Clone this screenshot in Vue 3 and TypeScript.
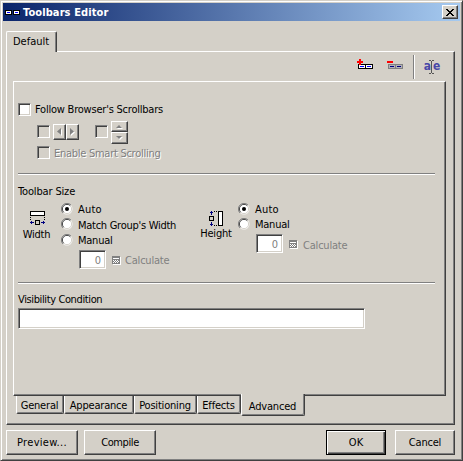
<script setup lang="ts">
import { ref } from 'vue'

type WidthMode = 'auto' | 'match' | 'manual'
type HeightMode = 'auto' | 'manual'

const pages = ['General', 'Appearance', 'Positioning', 'Effects', 'Advanced']
const page = ref('Advanced')
const follow = ref(false)
const widthMode = ref<WidthMode>('auto')
const heightMode = ref<HeightMode>('auto')
const condition = ref('')
const widthModes: { id: WidthMode; label: string }[] = [
  { id: 'auto', label: 'Auto' },
  { id: 'match', label: "Match Group's Width" },
  { id: 'manual', label: 'Manual' },
]
const heightModes: { id: HeightMode; label: string }[] = [
  { id: 'auto', label: 'Auto' },
  { id: 'manual', label: 'Manual' },
]
</script>

<template>
  <div class="window">
    <header class="titlebar">
      <svg class="logo" width="15" height="5" shape-rendering="crispEdges">
        <path d="M0 0h7v5h-7zM8 0h7v5h-7z" fill="#000" />
        <path d="M1 1h5v3h-5zM9 1h5v3h-5z" fill="#fff" />
        <path d="M2 2h3v1h-3zM10 2h3v1h-3z" fill="#00f" />
      </svg>
      <span class="title">Toolbars Editor</span>
      <button class="close" aria-label="Close">
        <svg width="8" height="7" shape-rendering="crispEdges">
          <path d="M0 0h2v1h-2zM6 0h2v1h-2zM1 1h2v1h-2zM5 1h2v1h-2zM2 2h4v1h-4zM3 3h2v1h-2zM2 4h4v1h-4zM1 5h2v1h-2zM5 5h2v1h-2zM0 6h2v1h-2zM6 6h2v1h-2z" />
        </svg>
      </button>
    </header>

    <div class="top-tabs"><div class="top-tab"><span class="t-default">Default</span></div></div>

    <section class="panel">
      <div class="toolbar">
        <svg class="add" width="16" height="11" shape-rendering="crispEdges">
          <path d="M1 5h15v5h-15z" fill="#000" />
          <path d="M2 6h6v3h-6zM9 6h6v3h-6z" fill="#fff" />
          <path d="M3 7h4v1h-4zM10 7h4v1h-4z" fill="#00f" />
          <path d="M2 0h2v2h2v2h-2v2h-2v-2h-2v-2h2z" fill="#f00" />
        </svg>
        <svg class="remove" width="16" height="11" shape-rendering="crispEdges">
          <path d="M1 5h15v5h-15z" fill="#808080" />
          <path d="M2 6h6v3h-6zM9 6h6v3h-6z" fill="#b0b0b8" />
          <path d="M3 7h4v1h-4zM10 7h4v1h-4z" fill="#000080" />
          <path d="M0 2h6v2h-6z" fill="#f00" />
        </svg>
        <i class="separator"></i>
        <div class="rename">
          <span>a</span>
          <svg width="5" height="14" shape-rendering="crispEdges">
            <path d="M0 0h2v1h-2zM3 0h2v1h-2zM2 1h1v12h-1zM0 13h2v1h-2zM3 13h2v1h-2z" fill="#555" />
          </svg>
          <span>e</span>
        </div>
      </div>

      <div class="page">
        <label class="row follow">
          <i class="check on"></i><span class="t-follow">Follow Browser's Scrollbars</span>
          <input v-model="follow" type="checkbox" hidden />
        </label>
        <div class="row scroll-dirs">
          <i class="check"></i>
          <div class="arrows horizontal">
            <b class="arrow"><svg width="4" height="7"><path d="M4 0v7L0 3.5z" fill="#808080" /></svg></b>
            <b class="arrow"><svg width="4" height="7"><path d="M0 0v7L4 3.5z" fill="#808080" /></svg></b>
          </div>
          <i class="check"></i>
          <div class="arrows vertical">
            <b class="arrow"><svg width="6" height="3"><path d="M0 3h6L3 0z" fill="#808080" /></svg></b>
            <b class="arrow"><svg width="6" height="3"><path d="M0 0h6L3 3z" fill="#808080" /></svg></b>
          </div>
        </div>
        <div class="row smart"><i class="check"></i><span class="t-smart">Enable Smart Scrolling</span></div>
        <hr class="rule" />

        <div class="heading t-size">Toolbar Size</div>
        <div class="sizes">
          <div class="kind width-kind">
            <svg width="16" height="16" shape-rendering="crispEdges">
              <path d="M1.5 1.5h14v4h-14z" fill="#fff" stroke="#000" />
              <path d="M1 7h1v1h-1zM1 9h1v1h-1zM15 7h1v1h-1zM15 9h1v1h-1z" />
              <path d="M6.5 10.500h4v4h-4z" fill="none" stroke="#000" />
              <path d="M1 12h4v1h-4zM2 11h1v3h-1zM12 12h4v1h-4zM14 11h1v3h-1z" fill="#000080" />
            </svg>
            <span class="t-width">Width</span>
          </div>
          <div class="options width-options">
            <label v-for="m in widthModes" :key="m.id" class="option">
              <input v-model="widthMode" type="radio" :value="m.id" hidden />
              <svg class="radio" width="12" height="12" viewBox="0 0 12 12">
                <circle cx="6" cy="6" r="5.500" fill="#fff" />
                <path d="M2 10A5.500 5.500 0 0 1 10 2" fill="none" stroke="#808080" />
                <path d="M2.700 9.300A4.600 4.600 0 0 1 9.300 2.700" fill="none" stroke="#404040" />
                <path d="M2.700 9.300A4.600 4.600 0 0 0 9.300 2.700" fill="none" stroke="#d4d0c8" />
                <circle v-if="widthMode === m.id" cx="6" cy="6" r="2" />
              </svg>
              <span :class="'t-' + m.id">{{ m.label }}</span>
            </label>
            <div class="manual"><div class="number">0</div>
              <svg class="calc" width="9" height="9" shape-rendering="crispEdges">
                <path d="M1 1h8v8h-8z" fill="#fff" /><path d="M0 0h8v8h-8z" fill="#808080" />
                <path d="M1 2h6v1h-6zM1 4h1v1h-1zM3 4h1v1h-1zM5 4h1v1h-1zM2 5h1v1h-1zM4 5h1v1h-1zM6 5h1v1h-1zM1 6h1v1h-1zM3 6h1v1h-1zM5 6h1v1h-1z" fill="#fff" />
              </svg>
              <span class="t-calc">Calculate</span>
            </div>
          </div>
          <div class="kind height-kind">
            <svg width="16" height="16" shape-rendering="crispEdges">
              <path d="M10.500 1.500h4v14h-4z" fill="#fff" stroke="#000" />
              <path d="M6 1h1v1h-1zM8 1h1v1h-1zM6 15h1v1h-1zM8 15h1v1h-1z" />
              <path d="M1.500 6.500h4v4h-4z" fill="none" stroke="#000" />
              <path d="M3 1h1v4h-1zM2 2h3v1h-3zM3 12h1v4h-1zM2 14h3v1h-3z" fill="#000080" />
            </svg>
            <span class="t-height">Height</span>
          </div>
          <div class="options">
            <label v-for="m in heightModes" :key="m.id" class="option">
              <input v-model="heightMode" type="radio" :value="m.id" hidden />
              <svg class="radio" width="12" height="12" viewBox="0 0 12 12">
                <circle cx="6" cy="6" r="5.500" fill="#fff" />
                <path d="M2 10A5.500 5.500 0 0 1 10 2" fill="none" stroke="#808080" />
                <path d="M2.700 9.300A4.600 4.600 0 0 1 9.300 2.700" fill="none" stroke="#404040" />
                <path d="M2.700 9.300A4.600 4.600 0 0 0 9.300 2.700" fill="none" stroke="#d4d0c8" />
                <circle v-if="heightMode === m.id" cx="6" cy="6" r="2" />
              </svg>
              <span :class="'t-' + m.id">{{ m.label }}</span>
            </label>
            <div class="manual"><div class="number">0</div>
              <svg class="calc" width="9" height="9" shape-rendering="crispEdges">
                <path d="M1 1h8v8h-8z" fill="#fff" /><path d="M0 0h8v8h-8z" fill="#808080" />
                <path d="M1 2h6v1h-6zM1 4h1v1h-1zM3 4h1v1h-1zM5 4h1v1h-1zM2 5h1v1h-1zM4 5h1v1h-1zM6 5h1v1h-1zM1 6h1v1h-1zM3 6h1v1h-1zM5 6h1v1h-1z" fill="#fff" />
              </svg>
              <span class="t-calc">Calculate</span>
            </div>
          </div>
        </div>
        <hr class="rule" />
        <div class="heading condition-heading t-condition">Visibility Condition</div>
        <input v-model="condition" class="condition" type="text" />
      </div>

      <nav class="bottom-tabs">
        <button v-for="p in pages" :key="p" class="bottom-tab" :class="[p.toLowerCase(), { active: p === page }]" @click="page = p">
          <span>{{ p }}</span>
        </button>
      </nav>
    </section>

    <footer class="actions">
      <button class="push preview"><span>Preview...</span></button>
      <button class="push compile"><span>Compile</span></button>
      <button class="push ok"><span>OK</span></button>
      <button class="push cancel"><span>Cancel</span></button>
    </footer>
  </div>
</template>

<style>
body { margin: 0; background: #d4d0c8; overflow: hidden; }
</style>

<style scoped>
* { box-sizing: border-box; }
svg { display: block; flex: none; }
button { font: inherit; color: inherit; padding: 0; margin: 0; background: #d4d0c8; border: 0; }
span { white-space: nowrap; display: block; }
.window {
  width: 463px; height: 461px; padding: 1px; background: #d4d0c8; color: #000;
  font: 11px/13px "DejaVu Sans Condensed", "DejaVu Sans", sans-serif; font-stretch: condensed;
  border: 1px solid; border-color: #d4d0c8 #404040 #404040 #d4d0c8;
  box-shadow: inset 1px 1px #fff, inset -1px -1px #808080;
}
.titlebar {
  height: 18px; margin: 1px 0 0 1px; width: 457px; display: flex; align-items: center;
  padding: 0 2px; background: linear-gradient(90deg, #0a246a, #a6caf0); color: #fff;
}
.title { margin-left: 3px; flex: 1; font-weight: bold; letter-spacing: 0.1px; }
.close {
  width: 16px; height: 14px; display: flex; align-items: center; justify-content: center;
  border: 1px solid; border-color: #fff #404040 #404040 #fff; box-shadow: inset -1px -1px #808080;
}
.top-tabs { height: 30px; padding: 10px 0 0 4px; }
.top-tab {
  position: relative; z-index: 1; width: 51px; height: 21px; padding: 3px 0 0 6px; background: #d4d0c8;
  border: 1px solid; border-color: #fff #404040 transparent #fff; border-bottom: 0;
  border-radius: 2px 2px 0 0; box-shadow: inset -1px 0 #808080;
}
.panel {
  width: 449px; height: 374px; margin-left: 4px; border: 1px solid;
  border-color: #fff #404040 #404040 #fff; box-shadow: inset -1px -1px #808080;
}
.toolbar { height: 29px; padding: 3px 14px 0 0; display: flex; justify-content: flex-end; align-items: flex-start; }
.add { margin: 4px 14px 0 0; }
.remove { margin: 4px 10px 0 0; }
.separator { width: 2px; height: 24px; background: linear-gradient(90deg, #808080 50%, #fff 50%); }
.rename { display: flex; margin: 5px 0 0 9px; color: #4848a8; font: bold 12px/13px "DejaVu Sans Condensed", "DejaVu Sans", sans-serif; width: 16px; justify-content: center; }
.rename svg { margin: 0 -1.5px; z-index: 1; }
.page {
  margin-left: 6px; width: 433px; height: 315px; padding: 21px 0 0 4px; border: 1px solid;
  border-color: #fff #404040 #404040 #fff; box-shadow: inset -1px -1px #808080;
}
.row { display: flex; align-items: flex-start; }
.check {
  width: 13px; height: 13px; flex: none; border: 1px solid; border-color: #808080 #fff #fff #808080;
  box-shadow: inset 1px 1px #404040, inset -1px -1px #d4d0c8;
}
.check.on { background: #fff; }
.follow { height: 18px; gap: 4px; }
.scroll-dirs { height: 25px; padding-left: 19px; }
.scroll-dirs .check { margin-top: 4px; }
.arrows { display: flex; }
.horizontal { margin: 3px 16px 0 3px; }
.vertical { flex-direction: column; margin-left: 3px; }
.arrow {
  display: flex; align-items: center; justify-content: center; padding: 0 1px 1px 0;
  border: 1px solid; border-color: #fff #404040 #404040 #fff; box-shadow: inset -1px -1px #808080;
}
.arrow svg { filter: drop-shadow(1px 1px 0 #fff); }
.horizontal .arrow { width: 13px; height: 16px; }
.vertical .arrow { width: 17px; height: 11px; }
.vertical .arrow + .arrow { height: 12px; }
.smart { padding-left: 19px; gap: 4px; height: 27px; color: #808080; text-shadow: 1px 1px #fff; }
.smart span { padding-top: 1px; }
.rule { width: 417px; height: 2px; margin: 0; border: 0; background: linear-gradient(#808080 50%, #fff 50%); }
.heading { height: 13px; margin-top: 10px; white-space: nowrap; }
.sizes { display: flex; height: 84px; padding-top: 5px; }
.kind { display: flex; flex-direction: column; align-items: center; padding-top: 7px; }
.width-kind { width: 37px; margin-right: 6px; }
.height-kind { width: 34px; margin-left: 4px; margin-right: 5px; }
.width-kind span { padding-top: 2px; }
.height-kind span { padding-top: 1px; }
.options { display: flex; flex-direction: column; width: 134px; }
.option { display: flex; gap: 5px; height: 15px; }
.width-options .option:nth-child(2) { height: 16px; }
.manual { display: flex; padding: 1px 0 0 18px; color: #808080; }
.number {
  width: 27px; height: 19px; padding: 3px 4px 0 0; background: #fff; text-align: right;
  border: 1px solid; border-color: #808080 #fff #fff #808080;
  box-shadow: inset 1px 1px #404040, inset -1px -1px #d4d0c8;
}
.calc { margin: 6px 4px 0 6px; }
.manual span { margin-top: 4px; }
.options:not(.width-options) .manual span { padding-left: 1px; margin-top: 5px; }
.condition-heading { margin-top: 9px; height: 15px; }
.condition {
  display: block; width: 347px; height: 21px; padding: 2px 4px; outline: 0; background: #fff; font: inherit;
  border: 1px solid; border-color: #808080 #fff #fff #808080; border-radius: 0;
  box-shadow: inset 1px 1px #404040, inset -1px -1px #d4d0c8;
}
.t-follow { letter-spacing: -0.22px; }
.t-smart { letter-spacing: -0.27px; }
.t-size { letter-spacing: -0.15px; }
.t-match { letter-spacing: -0.27px; padding-top: 1px; }
.t-auto { letter-spacing: 0.2px; }
.t-manual { letter-spacing: -0.25px; }
.t-width, .t-height, .t-calc { letter-spacing: -0.2px; }
.t-condition { letter-spacing: -0.38px; }
.bottom-tabs { display: flex; padding-left: 9px; height: 20px; }
.bottom-tab {
  height: 18px; padding: 0 1px 1px 0; display: flex; align-items: center; justify-content: center;
  border: 1px solid; border-color: transparent #404040 #404040 #fff; border-top: 0;
  border-radius: 0 0 2px 2px; box-shadow: inset -1px -1px #808080; letter-spacing: -0.2px;
}
.bottom-tab span { padding-top: 2px; }
.general { width: 48px; }
.appearance { width: 70px; }
.positioning { width: 63px; }
.effects { width: 44px; }
.active { position: relative; width: 64px; height: 22px; margin-top: -2px; }
.bottom-tab.active span { padding: 5px 0 0; }
.actions { display: flex; margin: 5px 0 0 4px; }
.push {
  width: 72px; height: 25px; display: flex; align-items: center; justify-content: center;
  border: 1px solid; border-color: #fff #404040 #404040 #fff; box-shadow: inset -1px -1px #808080;
}
.preview { letter-spacing: 0.3px; }
.cancel span { letter-spacing: -0.2px; }
.compile { margin-left: 6px; letter-spacing: -0.4px; }
.ok { width: 60px; margin-left: 170px; border-color: #000; box-shadow: inset 1px 1px #fff, inset -1px -1px #404040, inset -2px -2px #808080; }
.cancel { width: 60px; margin-left: 9px; }
</style>
